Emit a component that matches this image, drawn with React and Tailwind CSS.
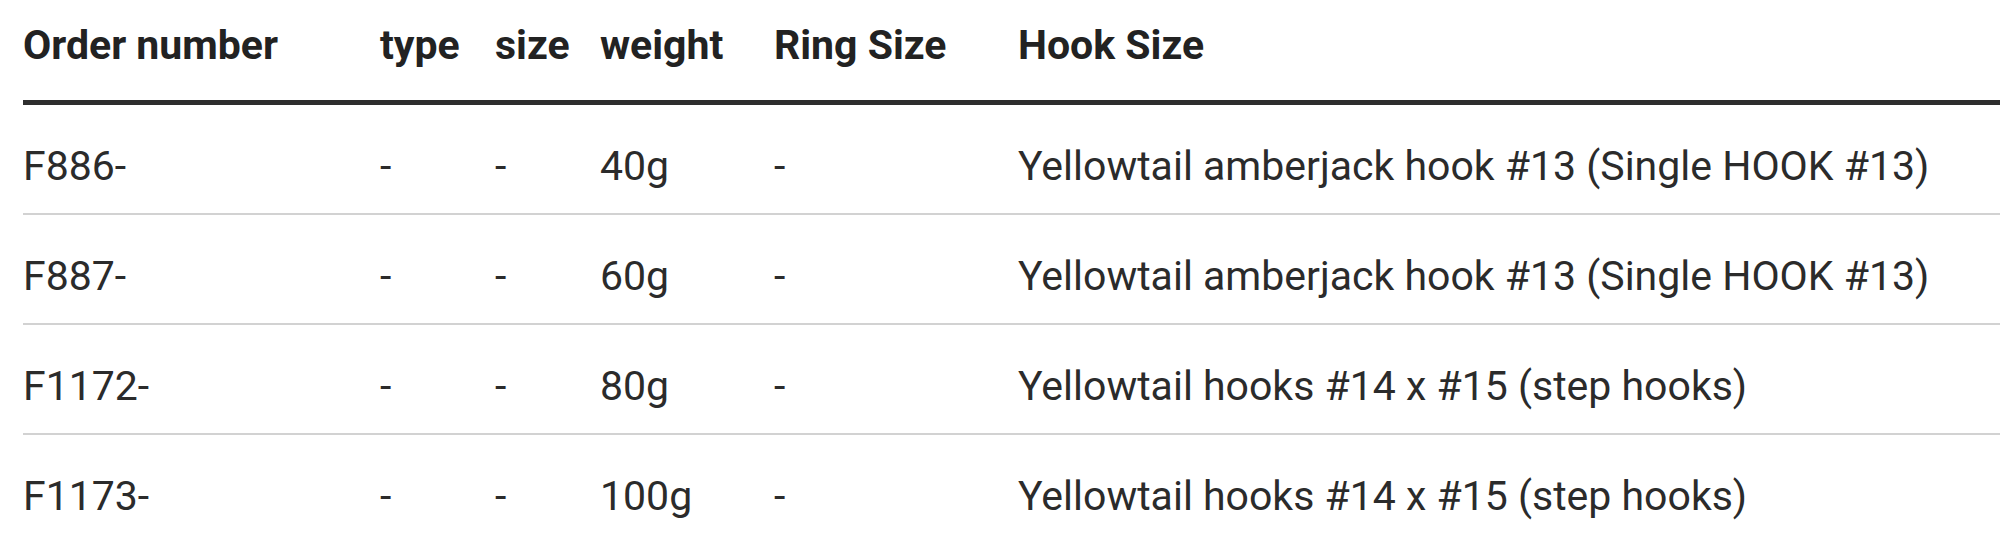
import React from "react";

const rows = [
  { order: "F886-", type: "-", size: "-", weight: "40g", ring: "-", hook: "Yellowtail amberjack hook #13 (Single HOOK #13)" },
  { order: "F887-", type: "-", size: "-", weight: "60g", ring: "-", hook: "Yellowtail amberjack hook #13 (Single HOOK #13)" },
  { order: "F1172-", type: "-", size: "-", weight: "80g", ring: "-", hook: "Yellowtail hooks #14 x #15 (step hooks)" },
  { order: "F1173-", type: "-", size: "-", weight: "100g", ring: "-", hook: "Yellowtail hooks #14 x #15 (step hooks)" },
];

function App() {
  return (
    <div className="min-h-screen bg-white pl-[23px]" style={{ fontFamily: "Roboto, 'Noto Sans', sans-serif" }}>
      <table className="w-full table-fixed border-collapse text-left">
        <colgroup>
          <col className="w-[357px]" />
          <col className="w-[115px]" />
          <col className="w-[105px]" />
          <col className="w-[174px]" />
          <col className="w-[244px]" />
          <col />
        </colgroup>
        <thead>
          <tr className="border-b-[5px] border-[#2e2e2e]">
            {["Order number", "type", "size", "weight", "Ring Size", "Hook Size"].map((h) => (
              <th key={h} className="pt-[21px] pb-[31px] text-[41px] leading-[48px] font-bold text-[#222] whitespace-nowrap">
                {h}
              </th>
            ))}
          </tr>
        </thead>
        <tbody>
          {rows.map((r) => (
            <tr key={r.order} className="border-b-2 border-[#d2d2d2]">
              {[r.order, r.type, r.size, r.weight, r.ring, r.hook].map((v, i) => (
                <td key={i} className="pt-[37px] pb-[23px] text-[41px] leading-[48px] text-[#2b2b2b] whitespace-nowrap">
                  {v}
                </td>
              ))}
            </tr>
          ))}
        </tbody>
      </table>
    </div>
  );
}

export default App;
